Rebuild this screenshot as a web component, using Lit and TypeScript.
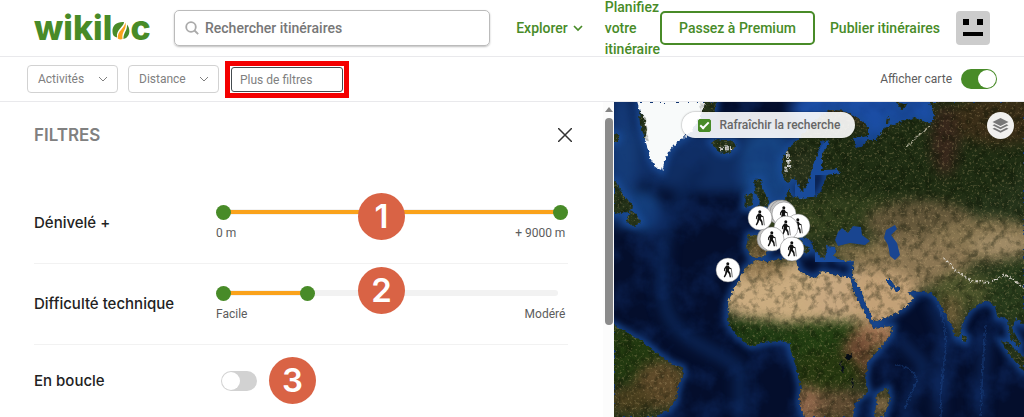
import { LitElement, html, css, svg } from "lit";
import { customElement, property, state } from "lit/decorators.js";

const LAND = [
  // Eurasia and Arabia
  "M930 102 L934 115 932 124 925 122 915 118 900 122 885 128 876 140 868 140 862 147 856 148 852 138 858 137 868 136 868 127 858 118 845 111 830 110 818 118 800 138 788 149 782 160 783 176 788 182 795 177 798 184 802 191 808 184 812 168 818 152 821 142 829 140 828 146 822 154 822 170 838 169 841 173 827 175 824 184 818 196 804 199 797 197 790 196 790 187 786 199 778 203 770 210 757 214 762 222 766 230 764 236 749 235 746 247 750 256 757 258 764 256 772 246 780 236 790 236 798 245 806 254 810 250 800 240 796 232 804 235 812 243 818 255 824 259 827 252 826 246 836 247 834 257 846 262 854 261 852 276 862 292 867 307 874 322 890 316 903 309 912 300 913 297 906 291 902 289 896 292 888 284 885 279 890 279 896 287 905 291 925 292 932 293 938 300 945 312 952 325 956 337 961 335 963 322 970 310 980 303 988 301 995 306 998 318 1006 317 1012 328 1016 318 1024 325 L1024 102Z",
  // Africa
  "M757 260 L768 262 780 259 796 259 798 270 808 276 816 278 822 271 832 274 844 277 850 277 853 290 860 304 867 318 873 328 893 326 890 336 880 348 868 362 865 378 868 392 855 403 853 417 L804 417 799 400 801 388 796 365 791 352 790 344 782 340 762 343 750 346 740 338 732 330 728 322 729 312 728 303 733 290 740 280 745 268Z",
  // South America
  "M614 325 L625 332 640 340 655 352 670 363 683 368 684 374 678 385 676 400 668 410 655 417 614 417Z",
  // British Isles, Iceland, Labrador, Newfoundland
  "M754 180 L761 179 762 188 768 200 769 206 756 209 760 202 755 191Z",
  "M746 195 L753 194 752 205 744 208Z",
  "M711 142 L718 139 726 141 733 140 736 147 728 154 719 152Z",
  "M614 178 L620 190 628 200 633 207 628 212 614 214Z",
  "M630 211 L636 214 641 222 634 226 626 222Z",
  "M614 133 L619 136 617 142 614 142Z",
  // Madagascar, Sri Lanka, Sumatra, Malay coast, arctic islands
  "M877 394 L888 388 890 398 884 417 875 417Z",
  "M962 334 L967 337 966 342 962 341Z",
  "M1001 341 L1010 344 1024 358 1024 371 1012 358Z",
  "M1008 320 L1014 332 1021 345 1018 347 1010 337Z",
  "M896 102 L907 105 902 110Z",
  "M887 118 L890 117 889 123 886 123Z",
  "M696 102 L716 102 714 113 700 113Z",
  "M639 112 L646 118 649 142 645 139 640 124Z",
].join(" ");

const ICE =
  "M637 102 L640 112 644 117 647 130 645 140 648 149 650 158 655 166 662 171 665 161 668 152 676 143 688 135 696 125 702 112 704 102Z";

const INLAND_SEAS =
  "M838 232 L842 228 848 233 853 226 861 227 862 235 870 241 865 245 850 243 838 246 835 240Z " +
  "M886 230 L895 225 897 229 891 235 897 243 900 255 895 260 890 256 888 245 884 238Z";

// [x, y, radius x, radius y, colour]
const TERRAIN: [number, number, number, number, string][] = [
  [900, 150, 130, 60, "#1f2d13"],
  [1000, 120, 50, 25, "#3a2e18"],
  [945, 140, 14, 36, "#37271b"],
  [860, 110, 40, 16, "#35301a"],
  [850, 215, 60, 22, "#2e3c1b"],
  [780, 225, 45, 18, "#374420"],
  [762, 248, 16, 12, "#6b5736"],
  [920, 222, 55, 22, "#64573a"],
  [985, 240, 55, 22, "#86744f"],
  [910, 262, 60, 26, "#8b7653"],
  [858, 252, 30, 8, "#82704a"],
  [1000, 245, 30, 12, "#a08b66"],
  [965, 290, 32, 18, "#4b532b"],
  [950, 315, 12, 20, "#695b37"],
  [1015, 292, 28, 30, "#283b1b"],
  [790, 292, 74, 32, "#cbac80"],
  [760, 268, 28, 10, "#947a52"],
  [850, 300, 38, 32, "#c8a880"],
  [884, 298, 36, 29, "#c3a177"],
  [830, 340, 88, 19, "#233e12"],
  [755, 333, 36, 14, "#203b13"],
  [875, 336, 24, 13, "#9b6f4f"],
  [857, 358, 16, 24, "#6d4932"],
  [825, 372, 36, 20, "#263810"],
  [830, 405, 50, 16, "#5f4b32"],
  [808, 405, 12, 20, "#8f674b"],
  [883, 405, 8, 15, "#806745"],
  [625, 355, 40, 28, "#223910"],
  [660, 385, 26, 24, "#5e4a2a"],
  [630, 400, 22, 14, "#4b401f"],
  [800, 168, 18, 24, "#28321b"],
];

const PINS: [number, number, boolean][] = [
  [779, 212, false],
  [782, 212, false],
  [784, 214, true],
  [798, 226, true],
  [786, 228, true],
  [769, 239, false],
  [772, 239, true],
  [760, 218, true],
  [792, 249, true],
  [728, 270, true],
];

const hiker = svg`
  <circle cx="-0.200" cy="-6.300" r="1.500"></circle>
  <path d="M-1.800 -4.400 L0.600 -4.400 1.800 -2.400 3.600 -1.500 3.300 -0.700 1.200 -1.300 0.900 0.600 2.400 3 3 7.200 1.700 7.300 1 4 -0.700 2 -1.500 4.600 -3.200 7.400 -4.300 6.700 -2.900 3.800 -2.200 -1.700 -3 -0.700 -3.200 1.200 -4.100 1.100 -3.900 -1.600Z"></path>
  <path d="M3.300 -1.200 L4.300 7.300" stroke="#111" stroke-width=".6"></path>`;

@customElement("world-map")
class WorldMap extends LitElement {
  static styles = css`
    :host { display: block; position: relative; overflow: hidden; background: #071a45; font-family: Roboto, sans-serif; }
    .canvas { position: absolute; inset: 0; width: 100%; height: 100%; display: block; }
    .refresh {
      position: absolute; left: 68px; top: 10px; height: 26px; padding: 0 15px 0 16px; box-sizing: border-box;
      display: flex; align-items: center; gap: 8px; border-radius: 13px;
      background: rgba(255, 255, 255, .9); color: #666; font-size: 12px; font-weight: 500; white-space: nowrap;
      box-shadow: 0 0 2px rgba(0, 0, 0, .5);
    }
    .tick {
      appearance: none; margin: 0; width: 13px; height: 13px; border-radius: 2px; border: 1px solid #488b28;
      display: grid; place-items: center;
    }
    .tick:checked { background: #488b28; }
    .tick:checked::after {
      content: ""; width: 7px; height: 3px; border: solid #fff; border-width: 0 0 2px 2px;
      transform: translateY(-1px) rotate(-45deg);
    }
    .layers {
      position: absolute; right: 10px; top: 10px; width: 27px; height: 27px; padding: 0; border: 0; border-radius: 50%;
      background: rgba(255, 255, 255, .93); display: grid; place-items: center;
    }
  `;

  render() {
    return html`
      <svg class="canvas" viewBox="614 102 410 315" preserveAspectRatio="xMinYMin slice" role="img" aria-label="Carte" color-interpolation-filters="sRGB">
        <defs>
          <clipPath id="land"><path d=${LAND}></path></clipPath>
          <filter id="soft" x="-50%" y="-50%" width="200%" height="200%"><feGaussianBlur stdDeviation="6"></feGaussianBlur></filter>
          <filter id="shelf" x="-20%" y="-20%" width="140%" height="140%"><feGaussianBlur stdDeviation="3"></feGaussianBlur></filter>
          <filter id="rough" x="-2%" y="-2%" width="104%" height="104%">
            <feTurbulence type="fractalNoise" baseFrequency=".3" numOctaves="2" seed="4"></feTurbulence>
            <feDisplacementMap in="SourceGraphic" scale="5" xChannelSelector="R" yChannelSelector="G"></feDisplacementMap>
          </filter>
          <filter id="grain" x="0" y="0" width="100%" height="100%">
            <feTurbulence type="fractalNoise" baseFrequency=".12" numOctaves="5" seed="9"></feTurbulence>
            <feColorMatrix values="0 0 0 0 .03  0 0 0 0 .06  0 0 0 0 .01  3.500 0 0 0 -1.600"></feColorMatrix>
          </filter>
          <filter id="glint" x="0" y="0" width="100%" height="100%">
            <feTurbulence type="fractalNoise" baseFrequency=".4" numOctaves="4" seed="21"></feTurbulence>
            <feColorMatrix values="0 0 0 0 .8  0 0 0 0 .7  0 0 0 0 .5  0 5 0 0 -2.800"></feColorMatrix>
          </filter>
          <filter id="swell" x="0" y="0" width="100%" height="100%">
            <feTurbulence type="fractalNoise" baseFrequency=".03" numOctaves="5" seed="5"></feTurbulence>
            <feColorMatrix values="0 0 0 0 .07  0 0 0 0 .2  0 0 0 0 .45  0 0 3 0 -1.300"></feColorMatrix>
          </filter>
        </defs>
        <rect x="614" y="102" width="410" height="315" fill="#040e2c"></rect>
        <g filter="url(#soft)">
          <ellipse cx="715" cy="155" rx="105" ry="38" fill="#0f2d62"></ellipse>
          <ellipse cx="622" cy="160" rx="16" ry="70" fill="#153c78"></ellipse>
          <ellipse cx="768" cy="170" rx="28" ry="42" fill="#164482"></ellipse>
          <ellipse cx="870" cy="110" rx="80" ry="30" fill="#1b4da4"></ellipse>
          <ellipse cx="645" cy="212" rx="17" ry="22" fill="#143f7c"></ellipse>
          <path d="M705 165 C665 210 658 245 664 300 C670 345 725 350 740 370 V417" fill="none" stroke="#0b2555" stroke-width="12"></path>
          <path d="M930 300 C955 340 935 360 940 417 M986 330 L980 417 M895 335 L925 365 905 410" fill="none" stroke="#0f2c62" stroke-width="8"></path>
        </g>
        <rect x="614" y="102" width="410" height="315" filter="url(#swell)" opacity=".4"></rect>
        <path d=${LAND + ICE} fill="none" stroke="#194b97" stroke-width="7" filter="url(#shelf)" opacity=".9"></path>
        <path d="M986 325 L983 360 981 417 M938 305 C955 345 938 365 941 417 M895 365 Q912 365 917 380 L905 408" fill="none" stroke="#204e94" stroke-width="1.500" opacity=".4" filter="url(#rough)"></path>
        <path d="M826 140 H842 V175 H815 V200 H795 V185Z M858 262 H815 V240 H836Z" fill="#194b9b"></path>
        <g filter="url(#rough)">
          <g clip-path="url(#land)">
            <rect x="614" y="102" width="410" height="315" fill="#25331a"></rect>
            <g filter="url(#soft)">
              ${TERRAIN.map(([x, y, rx, ry, c]) => svg`<ellipse cx=${x} cy=${y} rx=${rx} ry=${ry} fill=${c}></ellipse>`)}
            </g>
            <path d="M944 258 L957 272 972 281 990 282 1005 275 1024 287" fill="none" stroke="#d9d4cb" stroke-width="2" stroke-dasharray="2 2"></path>
            <path d="M906 148 L920 134 930 126" fill="none" stroke="#a9a893" stroke-width="1.500" stroke-dasharray="5 1"></path>
            <path d="M786 150 L790 164 785 172 M720 149 L732 148" fill="none" stroke="#ddd" stroke-width="4" stroke-dasharray="3 2"></path>
            <circle cx="849" cy="357" r="3" fill="#050c15"></circle>
            <path d="M840 361 L844 374 M852 378 L853 388" stroke="#0b111a" stroke-width="2"></path>
          </g>
          <path d=${ICE} fill="#f8fafa"></path>
        </g>
        <g clip-path="url(#land)">
          <rect x="614" y="102" width="410" height="315" filter="url(#grain)" opacity=".35"></rect>
          <rect x="614" y="102" width="410" height="315" filter="url(#glint)" opacity=".25"></rect>
        </g>
        <path d=${INLAND_SEAS} fill="#194590"></path>
        ${PINS.map(([x, y, front]) => svg`
          <g transform="translate(${x} ${y})" fill="#111">
            <circle r="12" fill=${front ? "#fff" : "#c4c4c4"} stroke="#777" stroke-width=".5"></circle>
            ${front ? hiker : ""}
          </g>`)}
      </svg>
      <label class="refresh"><input class="tick" type="checkbox" checked />Rafraîchir la recherche</label>
      <button class="layers" aria-label="Couches">
        <svg width="17" height="17" viewBox="0 0 17 17" fill="#777">
          <path d="M8.500 1 L16.500 5 8.500 9 .5 5Z"></path>
          <path d="M2.500 7.300 L8.500 10.300 14.500 7.300 16.500 8.300 8.500 12.300 .5 8.300Z"></path>
          <path d="M2.500 10.700 L8.500 13.700 14.500 10.700 16.500 11.700 8.500 15.700 .5 11.700Z"></path>
        </svg>
      </button>`;
  }
}

@customElement("range-filter")
class RangeFilter extends LitElement {
  @property() name = "";
  @property({ type: Number }) max = 100;
  @property({ type: Number }) low = 0;
  @property({ type: Number }) high = 100;
  @property() from = "";
  @property() to = "";

  static styles = css`
    :host { display: block; font-family: Roboto, sans-serif; }
    .slider { display: grid; align-items: center; height: 15px; }
    .slider > * { grid-area: 1 / 1; }
    .track { height: 6px; margin: 0 10px 0 8px; border-radius: 3px; background: #f2f2f2; }
    .span { margin: 0 8px; height: 4px; }
    .fill { height: 4px; background: #faa21b; }
    .thumb { appearance: none; width: 100%; height: 15px; margin: 0; background: none; pointer-events: none; }
    .thumb::-webkit-slider-thumb {
      appearance: none; width: 15px; height: 15px; border-radius: 50%; background: #488b28; pointer-events: auto;
    }
    .ends { display: flex; justify-content: space-between; padding: 5px 3px 0 0; font-size: 12px; line-height: 16px; color: #5c5c5c; }
  `;

  render() {
    const left = (this.low / this.max) * 100;
    const width = ((this.high - this.low) / this.max) * 100;
    return html`
      <div class="slider">
        <div class="track"></div>
        <div class="span"><div class="fill" style="margin-left:${left}%;width:${width}%"></div></div>
        <input class="thumb" type="range" aria-label="${this.name} minimum" min="0" max=${this.max} .value=${String(this.low)}
          @input=${(e: Event) => (this.low = Math.min(this.high, Number((e.target as HTMLInputElement).value)))} />
        <input class="thumb" type="range" aria-label="${this.name} maximum" min="0" max=${this.max} .value=${String(this.high)}
          @input=${(e: Event) => (this.high = Math.max(this.low, Number((e.target as HTMLInputElement).value)))} />
      </div>
      <div class="ends"><span>${this.from}</span><span>${this.to}</span></div>`;
  }
}

const chevron = (w: number, sw: number) => html`
  <svg width=${w} height=${w} viewBox="0 0 10 10" fill="none" stroke="currentColor" stroke-width=${sw}><path d="M1 3 L5 7 9 3"></path></svg>`;

@customElement("app-root")
class AppRoot extends LitElement {
  @state() showMap = true;

  static styles = css`
    :host {
      display: flex; flex-direction: column; height: 100vh; overflow: hidden; background: #fff;
      font-family: Roboto, sans-serif; color: #222;
    }
    a { color: inherit; text-decoration: none; }
    button { font: inherit; color: inherit; background: #fff; cursor: pointer; }
    .header {
      display: flex; align-items: center; height: 56px; flex: none; padding: 0 34px; border-bottom: 1px solid #e9e9ec;
      color: #488b28; font-size: 14px; font-weight: 500;
    }
    .logo { display: flex; align-items: baseline; width: 118px; margin-right: 22px; font: 800 34px/40px Inter, sans-serif; }
    .search {
      flex: 1; min-width: 0; height: 36px; box-sizing: border-box; display: flex; align-items: center; gap: 6px; padding: 0 10px;
      border: 1px solid #bbb; border-radius: 5px; box-shadow: 0 1px 2px rgba(0, 0, 0, .25);
    }
    .query { flex: 1; min-width: 0; border: 0; outline: 0; padding: 0; font: 500 14px Roboto, sans-serif; color: #777; }
    .query::placeholder { color: #777; opacity: 1; }
    .explore { display: flex; align-items: center; gap: 5px; margin: 0 22px 0 26px; padding: 0; border: 0; }
    .plan { width: min-content; line-height: 21px; }
    .premium { height: 34px; padding: 0 17px; box-sizing: border-box; border: 2px solid #488b28; border-radius: 5px; white-space: nowrap; line-height: 30px; }
    .publish { margin: 0 16px 0 15px; white-space: nowrap; }
    .avatar { display: block; padding: 0; border: 0; }
    .bar { display: flex; align-items: center; height: 44px; flex: none; padding: 0 27px; border-bottom: 1px solid #e9e9ec; font-size: 12px; color: #808080; }
    .drop {
      height: 28px; width: 91px; padding: 0 9px 0 10px; margin-right: 10px; box-sizing: border-box; border: 1px solid #d2d2d2; border-radius: 4px;
      display: flex; align-items: center; justify-content: space-between;
    }
    .marked { display: flex; margin-left: -4px; padding: 1px; border: 5px solid #f40000; }
    .more { width: 112px; height: 25px; padding: 1px 8px 0; box-sizing: border-box; border: 1px solid #444c50; border-radius: 3px; text-align: left; }
    .show { margin-left: auto; display: flex; align-items: center; gap: 9px; color: #5c5c5c; }
    .switch {
      appearance: none; margin: 0; width: 36px; height: 20px; padding: 1px; box-sizing: border-box; border-radius: 10px;
      background: #d2d2d2; display: flex; flex: none;
    }
    .switch::before { content: ""; width: 18px; height: 18px; border-radius: 50%; background: #fff; }
    .switch:checked { background: #488b28; justify-content: flex-end; }
    .main { flex: 1; min-height: 0; display: grid; grid-template-columns: minmax(0, 3fr) minmax(0, 2fr); }
    .main.wide { grid-template-columns: 1fr; }
    .panel { display: grid; grid-template-columns: minmax(0, 1fr) 11px; min-height: 0; overflow: hidden; }
    .filters { padding: 0 35px 0 34px; }
    .top { display: flex; align-items: center; justify-content: space-between; padding: 21px 0 0; height: 24px; }
    .title { margin: 0; font: 600 17px/24px Inter, sans-serif; color: #808080; }
    .close { display: flex; padding: 0; border: 0; margin-right: -4px; color: #333; }
    .rows { padding-top: 36px; }
    .row {
      position: relative; display: grid; grid-template-columns: 182px minmax(0, 1fr); align-items: center; height: 80px;
      border-bottom: 1px solid #f2f2f2;
    }
    .row.short { height: 72px; }
    .name { font: 500 15px/20px Inter, sans-serif; color: #222; }
    .range { height: 37px; }
    .toggle { margin-left: 5px; }
    .step {
      position: absolute; width: 47px; height: 47px; border-radius: 50%; background: #d96345; color: #fff;
      display: grid; place-items: center; font: 600 33px/47px Inter, sans-serif; z-index: 1;
    }
    .one { left: 324px; top: 10px; }
    .two { left: 324px; top: 3px; }
    .three { left: 235px; top: 12px; }
    .scroll { display: flex; flex-direction: column; align-items: center; gap: 6px; padding-top: 5px; background: #fcfcfc; }
    .up { border: 4px solid transparent; border-top: 0; border-bottom: 5px solid #858585; }
    .grip { width: 8px; height: 207px; border-radius: 4px; background: #8b8b8b; }
  `;

  render() {
    return html`
      <header class="header">
        <a class="logo" href="#" aria-label="wikiloc">wikil<svg width="18" height="19" viewBox="0 0 18 19">
          <path d="M.5 11 C0 4 5 .5 12 1 C12 6 4 8 5 16.500 C2 16 .6 14 .5 11Z" fill="#488b28"></path>
          <path d="M13.500 1.500 C15 9 9.500 10 10.500 18 C9 18.800 7 18.500 5.800 17.500 C5 10 12 8 13.500 1.500Z" fill="#faa21b"></path>
          <path d="M15 3.500 C19 8 18 16.500 11.500 18 C11 12 15.500 9.500 15 3.500Z" fill="#488b28"></path>
        </svg>c</a>
        <label class="search">
          <svg width="14" height="14" viewBox="0 0 14 14" fill="none" stroke="#aaa" stroke-width="1.800"><circle cx="6" cy="6" r="4.800"></circle><path d="M9.500 9.500 L13.200 13.200"></path></svg>
          <input class="query" type="text" placeholder="Rechercher itinéraires" aria-label="Rechercher itinéraires" />
        </label>
        <button class="explore">Explorer ${chevron(10, 1.7)}</button>
        <a class="plan" href="#">Planifiez votre itinéraire</a>
        <a class="premium" href="#">Passez à Premium</a>
        <a class="publish" href="#">Publier itinéraires</a>
        <button class="avatar" aria-label="Profil">
          <svg width="34" height="34" viewBox="0 0 34 34" display="block"><rect width="34" height="34" rx="4" fill="#ccc"></rect><path d="M7 8h6v6h-6z M21 8h6v6h-6z M7 21h20v4h-20z"></path></svg>
        </button>
      </header>
      <nav class="bar" aria-label="Filtres">
        <button class="drop">Activités ${chevron(10, 1)}</button>
        <button class="drop">Distance ${chevron(10, 1)}</button>
        <span class="marked"><button class="more">Plus de filtres</button></span>
        <label class="show">Afficher carte
          <input class="switch" type="checkbox" role="switch" .checked=${this.showMap}
            @change=${(e: Event) => (this.showMap = (e.target as HTMLInputElement).checked)} />
        </label>
      </nav>
      <main class="main ${this.showMap ? "" : "wide"}">
        <section class="panel">
          <div class="filters">
            <div class="top">
              <h2 class="title">FILTRES</h2>
              <button class="close" aria-label="Fermer">
                <svg width="14" height="14" viewBox="0 0 14 14" stroke="currentColor" stroke-width="1.500"><path d="M0 0 L14 14 M14 0 L0 14"></path></svg>
              </button>
            </div>
            <div class="rows">
              <div class="row">
                <span class="name">Dénivelé +</span>
                <range-filter class="range" name="Dénivelé" max="9000" low="0" high="9000" from="0 m" to="+ 9000 m"></range-filter>
                <span class="step one">1</span>
              </div>
              <div class="row">
                <span class="name">Difficulté technique</span>
                <range-filter class="range" name="Difficulté" max="4" low="0" high="1" from="Facile" to="Modéré"></range-filter>
                <span class="step two">2</span>
              </div>
              <div class="row short">
                <label class="name" for="loop">En boucle</label>
                <input id="loop" class="switch toggle" type="checkbox" role="switch" />
                <span class="step three">3</span>
              </div>
            </div>
          </div>
          <div class="scroll" aria-hidden="true"><span class="up"></span><span class="grip"></span></div>
        </section>
        ${this.showMap ? html`<world-map></world-map>` : ""}
      </main>`;
  }
}
